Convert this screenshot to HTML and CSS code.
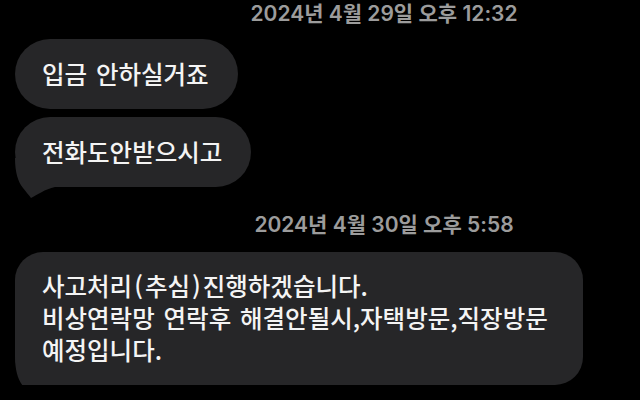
FILE: index.html
```html
<!DOCTYPE html>
<html lang="ko">
<head>
    <meta charset="UTF-8">
    <meta name="viewport" content="width=device-width, initial-scale=1.0">
    <title>메시지</title>
    <link rel="stylesheet" href="styles.css">
</head>
<body>
    <div class="thread">
        <div class="stamp">2024년 4월 29일 오후 12:32</div>

        <div class="bubble">입금 안하실거죠</div>
        <div class="bubble last">
            <svg class="tail" viewBox="0 0 40 40" aria-hidden="true">
                <path d="M0 0 C0 14 3 24 8 30 C11 34 14 37 16 40 C22 37 30 31 40 29 L40 0 Z"/>
            </svg>
            전화도안받으시고
        </div>

        <div class="stamp second">2024년 4월 30일 오후 5:58</div>

        <div class="bubble last long">
            <svg class="tail" viewBox="0 0 40 40" aria-hidden="true">
                <path d="M0 0 C0 14 3 24 8 30 C11 34 14 37 16 40 C22 37 30 31 40 29 L40 0 Z"/>
            </svg>
            사고처리<span class="paren">(</span>추심<span class="paren">)</span>진행하겠습니다.<br>
            비상연락망 연락후 해결안될시,자택방문,직장방문 예정입니다.
        </div>
    </div>
</body>
</html>
```

FILE: styles.css
```css
* {
    box-sizing: border-box;
    margin: 0;
    padding: 0;
}

body {
    background-color: #000;
    font-family: "Noto Sans CJK KR", sans-serif;
    overflow: hidden;
}

.thread {
    display: flex;
    flex-direction: column;
    align-items: flex-start;
    padding-left: 15px;
}

/* date / time separator */
.stamp {
    align-self: stretch;
    padding-left: 113px;
    text-align: center;
    font-family: Inter, "Noto Sans CJK KR", sans-serif;
    font-weight: 600;
    font-size: 21px;
    line-height: 28px;
    color: #9c9c9c;
}

.stamp.second {
    margin-top: 24px;
}

.bubble {
    position: relative;
    z-index: 0;
    margin-top: 11px;
    padding: 19px 29px 19px 27px;
    background-color: #262628;
    border-radius: 35px;
    color: #f4f4f4;
    font-size: 24.5px;
    font-weight: 500;
    line-height: 32px;
    word-spacing: 2px;
}

.bubble + .bubble {
    margin-top: 8px;
}

.bubble.long {
    margin-top: 13px;
    max-width: 568px;
    padding-top: 18px;
    padding-bottom: 19px;
    padding-right: 28px;
    border-radius: 28px;
}

.paren {
    margin: 0 2px;
}

/* little hook under the last bubble of a group */
.tail {
    position: absolute;
    z-index: -1;
    left: 0;
    bottom: -11px;
    width: 40px;
    height: 40px;
    fill: #262628;
}
```
